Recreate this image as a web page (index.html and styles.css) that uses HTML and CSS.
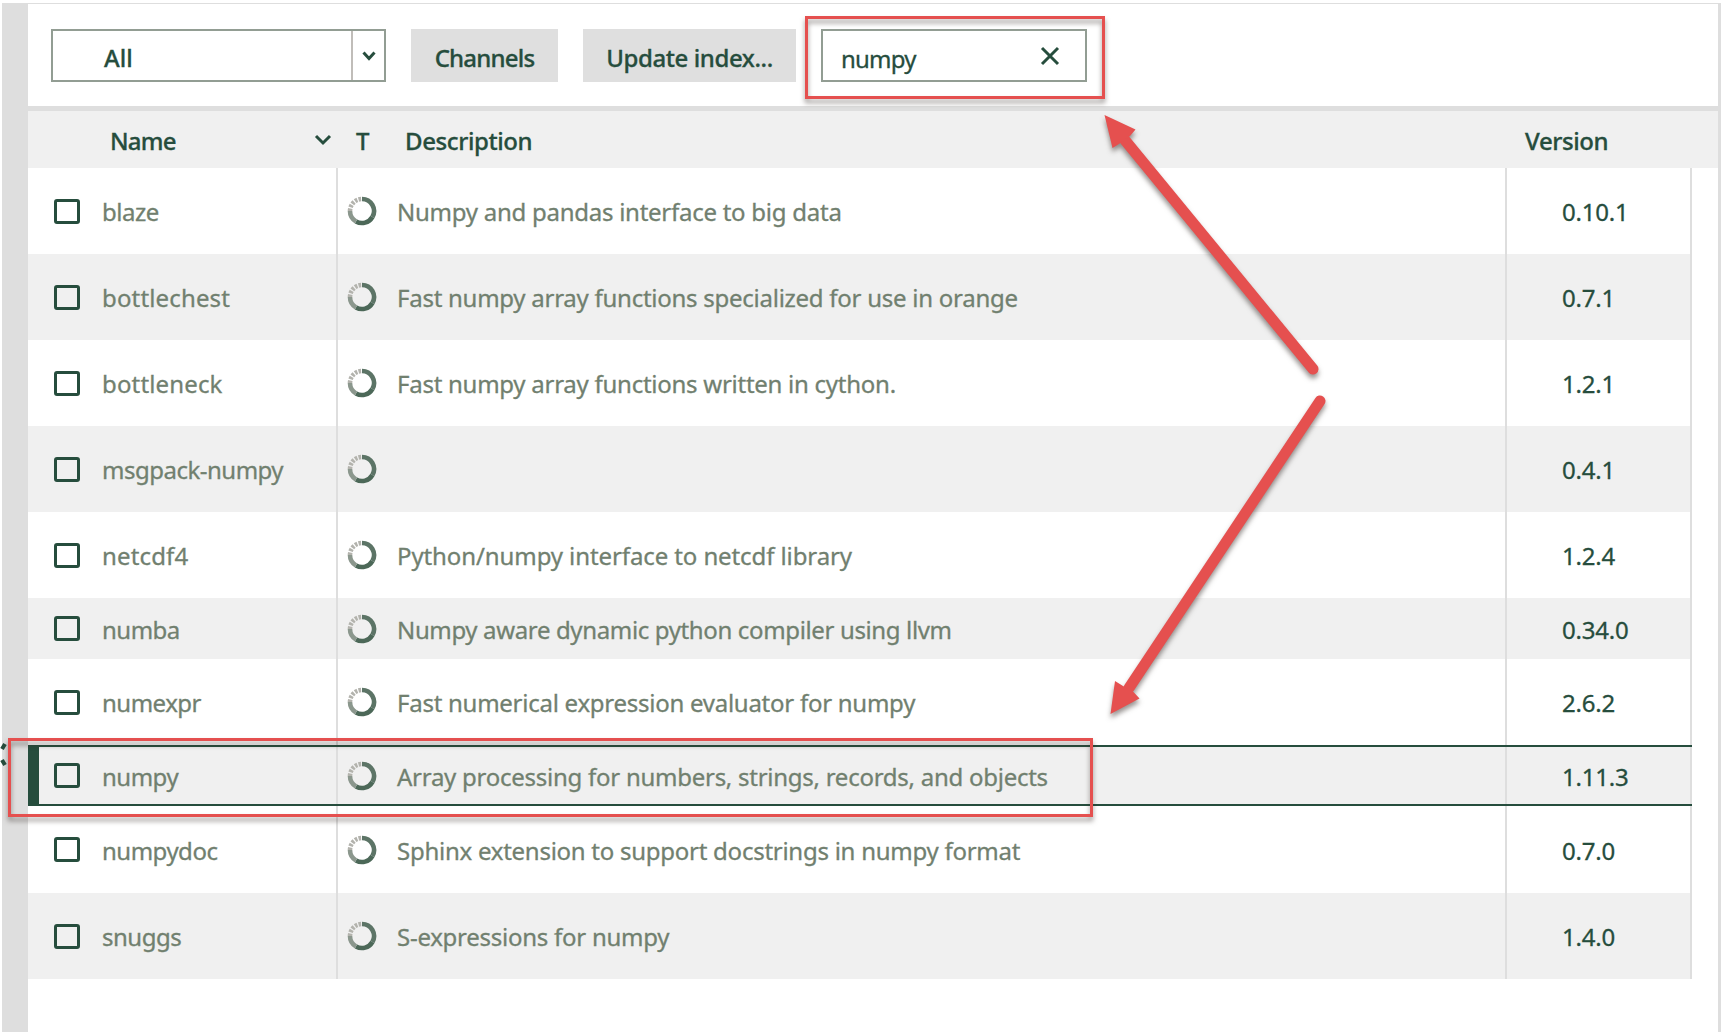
FILE: index.html
```html
<!DOCTYPE html>
<html lang="en">
<head>
<meta charset="utf-8">
<title>Packages</title>
<link rel="stylesheet" href="styles.css">
</head>
<body>
<svg class="defs" width="0" height="0" aria-hidden="true">
  <symbol id="ring" viewBox="0 0 30 30">
    <path d="M15 3A12 12 0 0 1 25.4 21" stroke="#5c7466"/>
    <path d="M25.4 21A12 12 0 0 1 9 25.4" stroke="#4c6858"/>
    <path d="M9 25.4A12 12 0 0 1 3 15" stroke="#8b978d"/>
    <path d="M3 15A12 12 0 0 1 15 3" stroke="#b3b3ad" stroke-dasharray="2.6 1.2"/>
  </symbol>
</svg>
<div class="app">
  <aside class="gutter"></aside>
  <main class="panel">
    <div class="toolbar">
      <div class="select"><span class="select-value">All</span><span class="select-arrow"><svg width="14" height="10" viewBox="0 0 14 10"><path d="M1.5 1.5L7 7.5L12.500 1.500"/></svg></span></div>
      <button class="btn channels">Channels</button>
      <button class="btn update">Update index...</button>
      <div class="search"><span>numpy</span><svg width="20" height="20" viewBox="0 0 20 20"><path d="M2 2L18 18M18 2L2 18"/></svg></div>
    </div>
    <div class="head">
      <span class="h-name">Name</span>
      <svg class="sort" width="18" height="12" viewBox="0 0 18 12"><path d="M2 2L9 9L16 2"/></svg>
      <span class="h-type">T</span>
      <span class="h-desc">Description</span>
      <span class="h-version">Version</span>
    </div>
    <div class="rows">
      <div class="row"><div class="name"><i class="check"></i><span>blaze</span></div><div class="desc"><svg class="ring"><use href="#ring"/></svg><span>Numpy and pandas interface to big data</span></div><div class="version">0.10.1</div></div>
      <div class="row"><div class="name loose"><i class="check"></i><span>bottlechest</span></div><div class="desc"><svg class="ring"><use href="#ring"/></svg><span>Fast numpy array functions specialized for use in orange</span></div><div class="version">0.7.1</div></div>
      <div class="row"><div class="name loose"><i class="check"></i><span>bottleneck</span></div><div class="desc"><svg class="ring"><use href="#ring"/></svg><span>Fast numpy array functions written in cython.</span></div><div class="version">1.2.1</div></div>
      <div class="row"><div class="name"><i class="check"></i><span>msgpack-numpy</span></div><div class="desc"><svg class="ring"><use href="#ring"/></svg></div><div class="version">0.4.1</div></div>
      <div class="row"><div class="name loose"><i class="check"></i><span>netcdf4</span></div><div class="desc loose"><svg class="ring"><use href="#ring"/></svg><span>Python/numpy interface to netcdf library</span></div><div class="version">1.2.4</div></div>
      <div class="row"><div class="name"><i class="check"></i><span>numba</span></div><div class="desc tight"><svg class="ring"><use href="#ring"/></svg><span>Numpy aware dynamic python compiler using llvm</span></div><div class="version">0.34.0</div></div>
      <div class="row"><div class="name"><i class="check"></i><span>numexpr</span></div><div class="desc"><svg class="ring"><use href="#ring"/></svg><span>Fast numerical expression evaluator for numpy</span></div><div class="version">2.6.2</div></div>
      <div class="row selected"><div class="name"><i class="check"></i><span>numpy</span></div><div class="desc"><svg class="ring"><use href="#ring"/></svg><span>Array processing for numbers, strings, records, and objects</span></div><div class="version">1.11.3</div></div>
      <div class="row"><div class="name"><i class="check"></i><span>numpydoc</span></div><div class="desc"><svg class="ring"><use href="#ring"/></svg><span>Sphinx extension to support docstrings in numpy format</span></div><div class="version">0.7.0</div></div>
      <div class="row"><div class="name"><i class="check"></i><span>snuggs</span></div><div class="desc"><svg class="ring"><use href="#ring"/></svg><span>S-expressions for numpy</span></div><div class="version">1.4.0</div></div>
    </div>
  </main>
</div>
<svg class="callouts" width="1725" height="1035" viewBox="0 0 1725 1035">
  <path d="M2 749L5 744M2 760L5 765" stroke="#264d3d" stroke-width="4"/>
  <g class="marks">
    <rect x="806.5" y="17.500" width="297" height="80"/>
    <rect x="9.500" y="739.500" width="1082" height="76"/>
    <path class="shaft" d="M1124 139L1313 369M1129 688L1320 401"/>
    <path class="tip" d="M1104.500 115L1135.500 129.500L1130 136L1119 144L1112.500 148ZM1110.500 714L1115 681L1123 686L1133.500 692L1139.500 698.500Z"/>
  </g>
</svg>
</body>
</html>
```
FILE: styles.css
```css
* { box-sizing: border-box; }
body {
  margin: 0;
  background: #fff;
  color: #264d3d;
  font-family: "Noto Sans", "Open Sans", sans-serif;
  font-size: 24px;
  line-height: 1;
  -webkit-text-stroke: 0.3px currentColor;
}
.defs { position: absolute; }
.app { display: flex; width: 1721px; height: 1032px; padding: 3px 0 0 2px; }
.gutter { width: 26px; background: #dedede; }
.panel { flex: 1; border-top: 1px solid #dedede; border-right: 3px solid #dedede; }

.toolbar {
  display: flex;
  height: 107px;
  padding: 25px 0 0 23px;
  border-bottom: 5px solid #dedede;
  font-weight: 500;
}
.select, .search { display: flex; height: 53px; border: 2px solid #929d93; }
.select { width: 335px; margin-right: 25px; }
.select-value { flex: 1; padding: 15px 0 0 51px; }
.select-arrow { width: 33px; border-left: 2px solid #c0bdb9; display: flex; align-items: center; justify-content: center; }
.toolbar svg, .sort { fill: none; stroke: #264d3d; stroke-width: 3; }
.btn {
  height: 53px;
  margin: 0;
  padding: 4px 0 0;
  border: 0;
  background: #dfdfdf;
  color: inherit;
  font: inherit;
}
.channels { width: 147px; margin-right: 25px; letter-spacing: -0.8px; }
.update { width: 213px; margin-right: 25px; letter-spacing: -0.4px; }
.search { width: 266px; justify-content: space-between; padding: 16px 25px 0 18px; letter-spacing: -0.8px; font-weight: 400; }
.search svg { margin-top: -1px; }

.head {
  display: flex;
  align-items: center;
  height: 57px;
  padding-left: 82px;
  background: #f0f0f0;
  font-weight: 500;
  letter-spacing: -0.8px;
}
.head span { padding-top: 3px; }
.h-name { width: 204px; }
.sort { width: 18px; margin-right: 24px; }
.h-type { width: 49px; }
.h-desc { width: 1120px; letter-spacing: -0.4px; }
.h-version { letter-spacing: -0.4px; }

.rows { width: 1664px; display: grid; grid-template-rows: repeat(5, 86px) 61px 86px 61px 87px 86px; }
.row { display: grid; grid-template-columns: 310px 1169px 185px; }
.row:nth-child(even) { background: #f0f0f0; }
.row > div { display: flex; align-items: center; border-right: 2px solid #dedede; }
.name, .desc { color: #71806f; }
.name { padding-left: 26px; letter-spacing: -0.5px; }
.name.loose { letter-spacing: 0.15px; }
.desc { padding-left: 9px; letter-spacing: -0.26px; }
.desc.loose { letter-spacing: -0.1px; }
.desc.tight { letter-spacing: -0.36px; }
.row .version { padding: 2px 0 0 55px; letter-spacing: -0.2px; }
.check { width: 26px; height: 25px; margin-right: 22px; border: 3px solid #264d3d; border-radius: 3px; }
.ring { width: 30px; height: 30px; margin-right: 20px; fill: none; stroke-width: 4.6; }
.name span, .desc span { margin-top: 2px; white-space: nowrap; }
.selected { border: solid #264d3d; border-width: 2px 0; box-shadow: inset 11px 0 #264d3d; }

.callouts { position: absolute; left: 0; top: 0; fill: none; pointer-events: none; }
.marks { stroke: #e5504f; stroke-width: 3; filter: drop-shadow(0 4px 2.5px rgba(50, 40, 35, .5)); }
.shaft { stroke-width: 11; stroke-linecap: round; }
.tip { fill: #e5504f; stroke-width: 0; }
```
